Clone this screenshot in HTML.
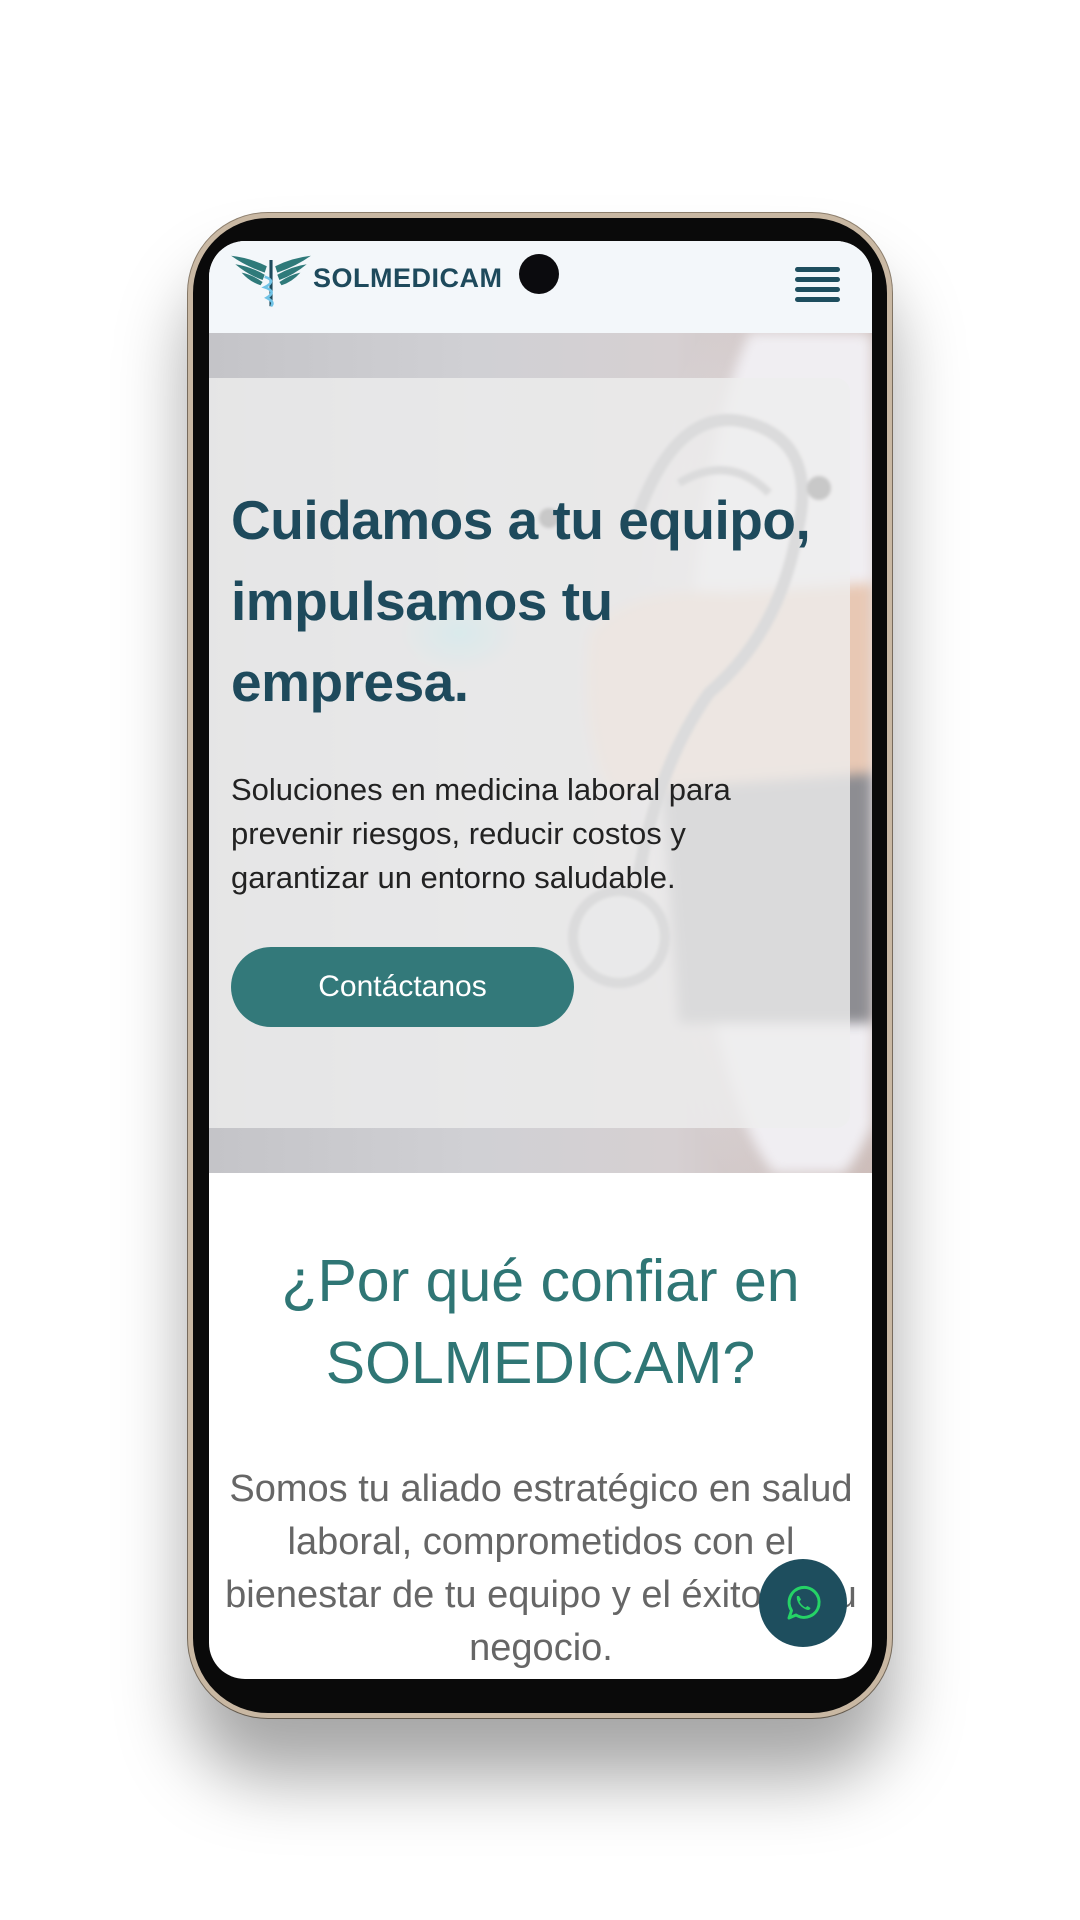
<!DOCTYPE html>
<html><head><meta charset="utf-8"><style>
*{margin:0;padding:0;box-sizing:border-box}
body{width:1080px;height:1920px;background:#fff;position:relative;overflow:hidden;font-family:"Liberation Sans",sans-serif}
.phone{position:absolute;left:188px;top:213px;width:704px;height:1505px;border-radius:80px;background:#0a0a0a;border:5px solid #c9b8a3;box-shadow:0 60px 70px rgba(0,0,0,.35),0 0 0 1px #8f816f}
.screen{position:absolute;left:209px;top:241px;width:663px;height:1438px;border-radius:36px;overflow:hidden;background:#fff}
.hdr{position:absolute;left:0;top:0;width:663px;height:92px;background:#f3f7fa}
.hero{position:absolute;left:0;top:92px;width:663px;height:840px;overflow:hidden;background:
radial-gradient(ellipse 60px 40px at 250px 300px,rgba(120,220,230,.8),transparent),
radial-gradient(ellipse 200px 500px at 610px 400px,#f3f1f4,transparent),
linear-gradient(90deg,#c4c4c8 0%,#d0d0d4 40%,#d6d0d2 70%,#c9b8b4 100%)}
.card{position:absolute;left:0;top:45px;width:641px;height:750px;border-radius:0 14px 14px 0;background:rgba(238,238,238,.8)}
h1{position:absolute;left:22px;top:147px;width:600px;font-size:55px;line-height:81px;color:#1e4a5c;font-weight:bold;letter-spacing:-.5px}
.p{position:absolute;left:22px;top:435px;width:530px;font-size:31px;line-height:44px;color:#222}
.btn{position:absolute;left:22px;top:614px;width:343px;height:80px;border-radius:40px;background:#33797a;color:#fff;font-size:30px;text-align:center;line-height:80px}
h2{position:absolute;left:0;top:999px;width:663px;text-align:center;font-size:59px;line-height:82px;font-weight:normal;color:#2f7675}
.b{position:absolute;left:12px;top:1222px;width:640px;text-align:center;font-size:38px;line-height:53px;color:#666}
.wa{position:absolute;left:550px;top:1318px;width:88px;height:88px;border-radius:50%;background:#1e4e5e}
</style></head><body>
<div class="phone"></div>
<div class="screen">
 <div class="hero">
  <svg style="position:absolute;left:0;top:0;filter:blur(6px)" width="663" height="840">
   <ellipse cx="600" cy="400" rx="120" ry="460" fill="#f0eef2"/>
   <path d="M453 451 L663 430 L663 690 L470 690 Z" fill="#8d8d92"/>
   <path d="M380 300 Q420 250 520 260 L663 250 L663 440 L400 460 Q370 400 380 300Z" fill="#e8c8b4"/>
  </svg>
  <svg style="position:absolute;left:0;top:0;filter:blur(1.5px)" width="663" height="840">
   <path d="M429 181 Q470 70 540 90 Q610 110 588 200 Q570 300 500 360 Q450 430 430 540" fill="none" stroke="#8f9094" stroke-width="12"/>
   <path d="M470 150 Q520 120 560 160" fill="none" stroke="#8f9094" stroke-width="8"/>
   <circle cx="410" cy="604" r="46" fill="#d8d8da" stroke="#8f9094" stroke-width="10"/>
   <circle cx="610" cy="155" r="12" fill="#333"/>
   <circle cx="340" cy="185" r="10" fill="#333"/>
  </svg>
  <div class="card"></div>
  <h1>Cuidamos a tu equipo, impulsamos tu empresa.</h1>
  <div class="p">Soluciones en medicina laboral para prevenir riesgos, reducir costos y garantizar un entorno saludable.</div>
  <div class="btn">Contáctanos</div>
 </div>
 <div class="hdr">
  <svg style="position:absolute;left:20px;top:12px" width="84" height="56" viewBox="0 0 80 52">
   <path d="M2 2 Q20 4 36 12 L34 18 Q16 12 2 2Z M6 10 Q20 12 34 20 L32 25 Q18 20 6 10Z M12 18 Q22 20 32 27 L30 30 Q20 27 12 18Z" fill="#2f7a7a"/>
   <path d="M78 2 Q60 4 44 12 L46 18 Q64 12 78 2Z M74 10 Q60 12 46 20 L48 25 Q62 20 74 10Z M68 18 Q58 20 48 27 L50 30 Q60 27 68 18Z" fill="#2f7a7a"/>
   <rect x="38.5" y="6" width="3" height="44" fill="#1e4a5c"/>
   <path d="M34 22 Q46 26 34 32 Q46 36 36 42 Q44 46 40 50" stroke="#6fc3e6" stroke-width="2.5" fill="none"/>
  </svg>
  <div style="position:absolute;left:104px;top:22px;font-size:27px;font-weight:bold;color:#1e4a5c;letter-spacing:.5px">SOLMEDICAM</div>
  <div style="position:absolute;left:310px;top:13px;width:40px;height:40px;border-radius:50%;background:#0b0b0e"></div>
  <div style="position:absolute;left:586px;top:26px;width:45px">
   <div style="height:5px;background:#1e4e5e;border-radius:3px;margin-bottom:5px"></div>
   <div style="height:5px;background:#1e4e5e;border-radius:3px;margin-bottom:5px"></div>
   <div style="height:5px;background:#1e4e5e;border-radius:3px;margin-bottom:5px"></div>
   <div style="height:5px;background:#1e4e5e;border-radius:3px"></div>
  </div>
 </div>
 <h2>¿Por qué confiar en SOLMEDICAM?</h2>
 <div class="b">Somos tu aliado estratégico en salud laboral, comprometidos con el bienestar de tu equipo y el éxito de tu negocio.</div>
 <div class="wa"><svg style="position:absolute;left:24px;top:24px" width="40" height="40" viewBox="0 0 40 40">
  <path d="M6 35 L8.5 27.5 A15 15 0 1 1 13 32 Z" fill="none" stroke="#25d366" stroke-width="3" stroke-linejoin="round"/>
  <path d="M14 13 Q13 16 16 21 Q20 26 25 27 Q27 27 27.5 25 L24.5 23 L22.5 24.5 Q18.5 22.5 16.5 18.5 L18 16.5 L16 13 Z" fill="#25d366"/>
 </svg></div>
</div>
</body></html>
